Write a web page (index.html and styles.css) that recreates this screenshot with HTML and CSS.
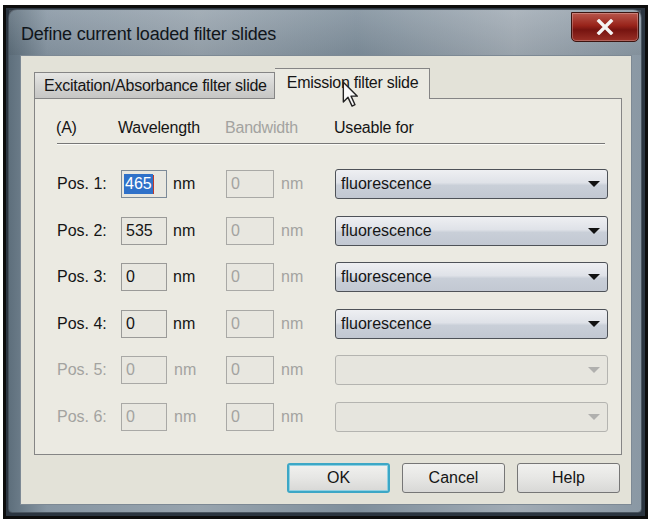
FILE: index.html
```html
<!DOCTYPE html>
<html lang="en">
<head>
<meta charset="UTF-8">
<meta name="viewport" content="width=device-width, initial-scale=1.0">
<title>Define current loaded filter slides</title>
<link rel="stylesheet" href="styles.css">
</head>
<body>
<div class="photo">
    <div class="window">
        <div class="titlebar">
            <span class="title">Define current loaded filter slides</span>
            <div class="close">
                <svg width="20" height="16" viewBox="0 0 20 16">
                    <path d="M4 2 L16 14 M16 2 L4 14" stroke="#f4f4f4" stroke-width="3.4" stroke-linecap="square"/>
                </svg>
            </div>
        </div>
        <div class="client">
            <div class="tabs">
                <div class="tab">Excitation/Absorbance filter slide</div>
                <div class="tab active">Emission filter slide</div>
            </div>
            <div class="panel">
                <div class="grid head">
                    <span>(A)</span>
                    <span class="wl">Wavelength</span>
                    <span class="bw disabled">Bandwidth</span>
                    <span class="use">Useable for</span>
                </div>
                <div class="sep"></div>
                <div class="rows">
                    <div class="grid row">
                        <span class="label">Pos. 1:</span>
                        <div class="field focus"><span class="sel">465</span><span class="caret"></span></div>
                        <span class="unit">nm</span>
                        <div class="field off">0</div>
                        <span class="unit disabled">nm</span>
                        <div class="combo">fluorescence<span class="arrow"></span></div>
                    </div>
                    <div class="grid row">
                        <span class="label">Pos. 2:</span>
                        <div class="field">535</div>
                        <span class="unit">nm</span>
                        <div class="field off">0</div>
                        <span class="unit disabled">nm</span>
                        <div class="combo">fluorescence<span class="arrow"></span></div>
                    </div>
                    <div class="grid row">
                        <span class="label">Pos. 3:</span>
                        <div class="field">0</div>
                        <span class="unit">nm</span>
                        <div class="field off">0</div>
                        <span class="unit disabled">nm</span>
                        <div class="combo">fluorescence<span class="arrow"></span></div>
                    </div>
                    <div class="grid row">
                        <span class="label">Pos. 4:</span>
                        <div class="field">0</div>
                        <span class="unit">nm</span>
                        <div class="field off">0</div>
                        <span class="unit disabled">nm</span>
                        <div class="combo">fluorescence<span class="arrow"></span></div>
                    </div>
                    <div class="grid row">
                        <span class="label disabled">Pos. 5:</span>
                        <div class="field off">0</div>
                        <span class="unit disabled">nm</span>
                        <div class="field off">0</div>
                        <span class="unit disabled">nm</span>
                        <div class="combo off"><span class="arrow"></span></div>
                    </div>
                    <div class="grid row">
                        <span class="label disabled">Pos. 6:</span>
                        <div class="field off">0</div>
                        <span class="unit disabled">nm</span>
                        <div class="field off">0</div>
                        <span class="unit disabled">nm</span>
                        <div class="combo off"><span class="arrow"></span></div>
                    </div>
                </div>
            </div>
            <div class="buttons">
                <button class="default">OK</button>
                <button>Cancel</button>
                <button>Help</button>
            </div>
        </div>
    </div>
    <svg class="cursor" width="19" height="28" viewBox="0 0 16 24">
        <path d="M1 1 L1 18 L5 14 L8.5 21.5 L11 20.3 L7.6 13 L13 13 Z" fill="#fafafa" stroke="#222" stroke-width="1.2" stroke-linejoin="round"/>
    </svg>
</div>
</body>
</html>
```
FILE: styles.css
```css
body, html {
    margin: 0;
    padding: 0;
}
body {
    background-color: #fff;
    padding: 5px 4px 6px 3px;
    font-family: "Liberation Sans", Arial, sans-serif;
    font-size: 16px;
    color: #151515;
}
.photo {
    position: relative;
    box-sizing: border-box;
    height: 514px;
    border: 3px solid #0d0d0d;
    background-color: #2b3540;
    padding: 1px 3px 3px 2px;
}
.window {
    box-sizing: border-box;
    height: 504px;
    display: flex;
    flex-direction: column;
    border-radius: 9px 9px 4px 4px;
    border: 1px solid #4a5560;
    background: linear-gradient(90deg, #5e6f7c 0%, #8796a3 6%, #98a4ae 30%, #7f8f9c 55%, #a2acb5 80%, #8a98a4 100%);
}
.titlebar {
    height: 45px;
    display: flex;
    justify-content: space-between;
    align-items: flex-start;
    padding: 0 2px 0 12px;
    background: linear-gradient(180deg, rgba(255,255,255,0.12), rgba(0,0,0,0.05));
}
.title {
    margin-top: 14px;
    font-size: 18px;
    line-height: 20px;
    letter-spacing: -0.2px;
    color: #10151a;
}
.close {
    margin-top: 2px;
    width: 66px;
    height: 28px;
    display: flex;
    justify-content: center;
    align-items: center;
    border: 1px solid #3c1410;
    border-radius: 0 0 5px 5px;
    background: linear-gradient(180deg, #b8574c 0%, #98231a 45%, #761410 60%, #9a3026 100%);
    box-shadow: inset 0 0 0 1px rgba(255,255,255,0.25);
}
.client {
    flex: 1;
    margin: 0 9px 7px 11px;
    padding: 12px 9px 0 13px;
    background-color: #e3e2d8;
    border: 1px solid #7d8994;
    display: flex;
    flex-direction: column;
}
.tabs {
    display: flex;
    align-items: flex-end;
    height: 30px;
    position: relative;
    z-index: 1;
}
.tab {
    box-sizing: border-box;
    height: 26px;
    padding: 0 7px 0 9px;
    line-height: 25px;
    letter-spacing: -0.25px;
    border: 1px solid #858585;
    border-bottom: none;
    background: linear-gradient(180deg, #e6e6e4 0%, #d4d4d2 50%, #c6c6c4 100%);
    white-space: nowrap;
}
.tab.active {
    height: 31px;
    padding: 0 11px 0 12px;
    line-height: 28px;
    margin-bottom: -1px;
    border-left: none;
    background-color: #ebeae2;
    background-image: none;
}
.panel {
    box-sizing: border-box;
    height: 357px;
    border: 1px solid #858585;
    background-color: #ebeae2;
    padding: 0 16px 0 21px;
}
.grid {
    display: grid;
    grid-template-columns: 65px 46px 59px 48px 61px 273px;
    align-items: center;
}
.head {
    margin-top: 19px;
    height: 20px;
    letter-spacing: -0.2px;
}
.head .wl {
    grid-column: 2 / 4;
    margin-left: -3px;
}
.head .bw {
    grid-column: 4 / 6;
    margin-left: -1px;
}
.head .use {
    grid-column: 6;
    margin-left: -1px;
}
.sep {
    margin: 5px 0 0 1px;
    height: 1px;
    background-color: #777;
    border-bottom: 1px solid #fbfbf7;
}
.rows {
    margin-top: 24px;
    display: flex;
    flex-direction: column;
    gap: 18.5px;
}
.row {
    height: 28px;
}
.label {
    padding-left: 1px;
}
.unit {
    padding-left: 6px;
}
.unit.disabled {
    padding-left: 7px;
}
.disabled {
    color: #a3a3a0;
}
.field {
    box-sizing: border-box;
    height: 28px;
    padding-left: 4px;
    line-height: 26px;
    border: 1px solid #9a9a98;
    background-color: #e8e7e0;
    display: flex;
    align-items: center;
}
.field.off {
    color: #a3a3a0;
    border-color: #a9a9a6;
}
.field.focus {
    border-color: #7c8a98;
    padding-left: 2px;
}
.sel {
    background-color: #2f71c9;
    color: #fff;
    line-height: 20px;
    padding: 0 1px;
}
.caret {
    width: 1px;
    height: 19px;
    background-color: #c0392b;
}
.combo {
    box-sizing: border-box;
    height: 30px;
    position: relative;
    padding-left: 5px;
    line-height: 28px;
    border: 1px solid #4e5258;
    border-radius: 3px;
    background: linear-gradient(180deg, #eeeff2 0%, #dfe2e8 45%, #c9cfd8 55%, #c2c8d2 100%);
}
.combo.off {
    border-color: #b4b4b0;
    background: #e6e5de;
}
.arrow {
    position: absolute;
    right: 7px;
    top: 11px;
    width: 0;
    height: 0;
    border-left: 6px solid transparent;
    border-right: 6px solid transparent;
    border-top: 6px solid #111;
}
.combo.off .arrow {
    border-top-color: #b0b0ae;
}
.buttons {
    display: flex;
    justify-content: flex-end;
    gap: 12px;
    margin-top: 8px;
    padding-right: 2px;
}
button {
    box-sizing: border-box;
    width: 103px;
    height: 30px;
    font-family: "Liberation Sans", Arial, sans-serif;
    font-size: 16px;
    color: #151515;
    border: 1px solid #767676;
    border-radius: 3px;
    background: linear-gradient(180deg, #f1f1ef 0%, #e6e6e4 50%, #d8d8d6 100%);
}
button.default {
    border: 2px solid #3ca7c6;
    box-shadow: inset 0 0 0 1px #8fd0e2;
}
.cursor {
    position: absolute;
    z-index: 5;
    left: 336px;
    top: 73px;
}
```
